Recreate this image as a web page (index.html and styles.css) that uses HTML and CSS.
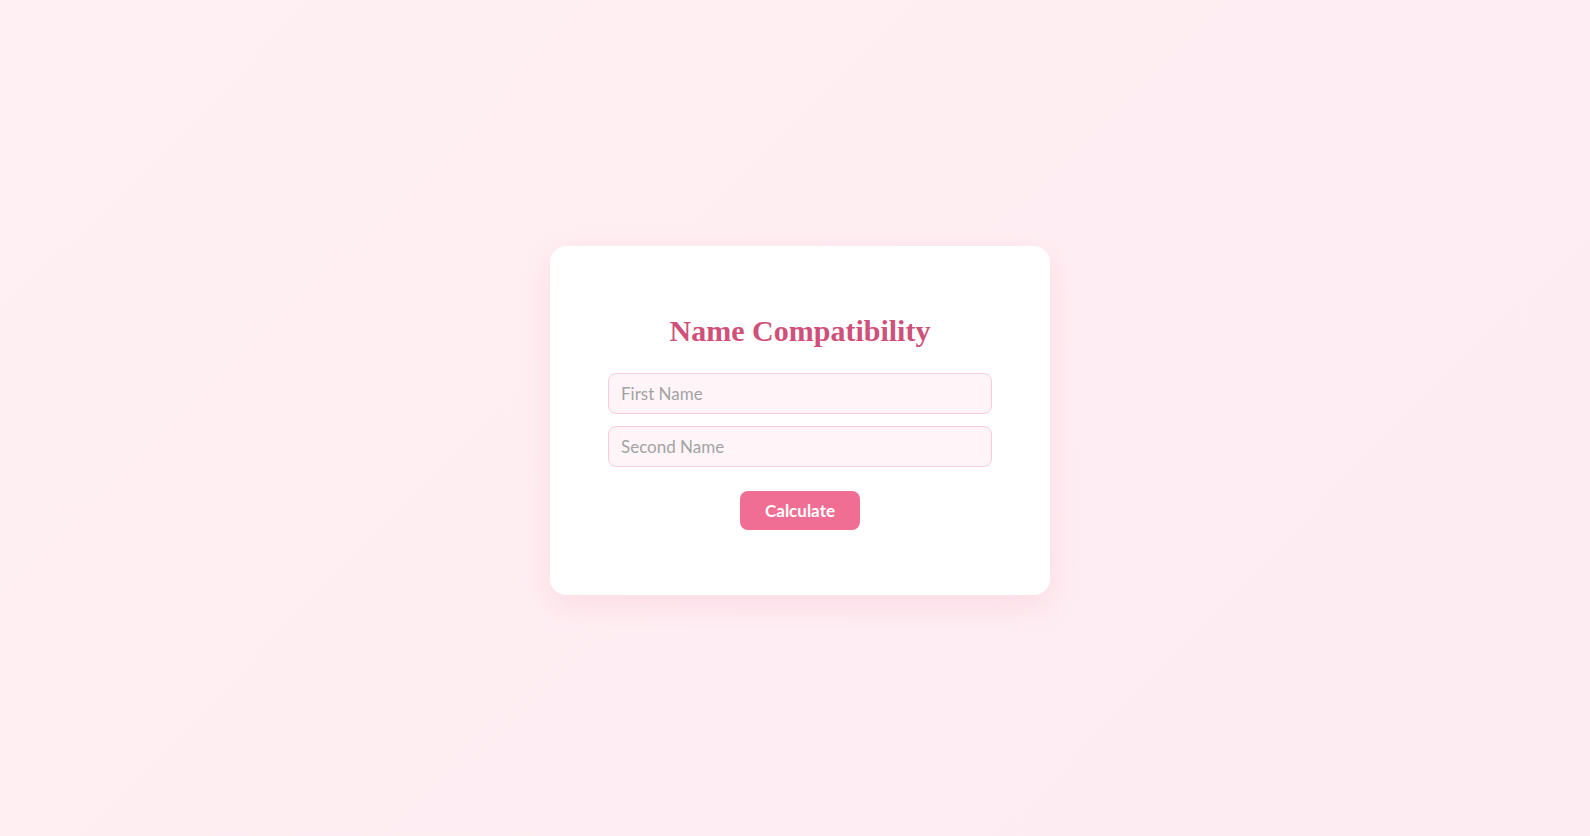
FILE: index.html
```html
<!DOCTYPE html>
<html lang="en">
<head>
<meta charset="utf-8">
<title>Name Compatibility</title>
<link rel="stylesheet" href="styles.css">
</head>
<body>
  <main class="card">
    <h2 class="title">Name Compatibility</h2>
    <input class="field" type="text" placeholder="First Name">
    <input class="field" type="text" placeholder="Second Name">
    <div class="actions">
      <button class="btn" type="button">Calculate</button>
    </div>
  </main>
</body>
</html>
```

FILE: styles.css
```css
* { box-sizing: border-box; }
html { overflow: hidden; }
body {
  margin: 0;
  height: 100vh;
  display: flex;
  align-items: center;
  justify-content: center;
  background: linear-gradient(135deg, #fff0f3 0%, #fdecf2 100%);
  font-family: "Lato", "Liberation Sans", sans-serif;
}
.card {
  width: 500px;
  margin: 5px 0 0 10px;
  background: #ffffff;
  border-radius: 16px;
  padding: 64px 58px 65px;
  box-shadow: 0 10px 30px rgba(244, 143, 177, 0.2);
  display: flex;
  flex-direction: column;
}
.title {
  margin: 0 0 21px;
  font-family: "Liberation Serif", "DejaVu Serif", serif;
  font-weight: 700;
  font-size: 30px;
  line-height: 42px;
  color: #cf5079;
  text-align: center;
}
.field {
  display: block;
  width: 100%;
  height: 41px;
  margin: 0 0 12px;
  padding: 0 12px;
  border: 1px solid #f9cbdb;
  border-radius: 8px;
  background: #fff5f8;
  font-family: "Lato", "Liberation Sans", sans-serif;
  font-size: 17px;
  color: #555;
  outline: none;
}
.field::placeholder { color: #a3a3a3; }
.actions {
  display: flex;
  justify-content: center;
  margin-top: 12px;
}
.btn {
  width: 120px;
  height: 39px;
  border: none;
  border-radius: 8px;
  background: #f06e93;
  color: #ffffff;
  font-family: "Lato", "Liberation Sans", sans-serif;
  font-weight: 700;
  font-size: 17px;
  cursor: pointer;
}
```
